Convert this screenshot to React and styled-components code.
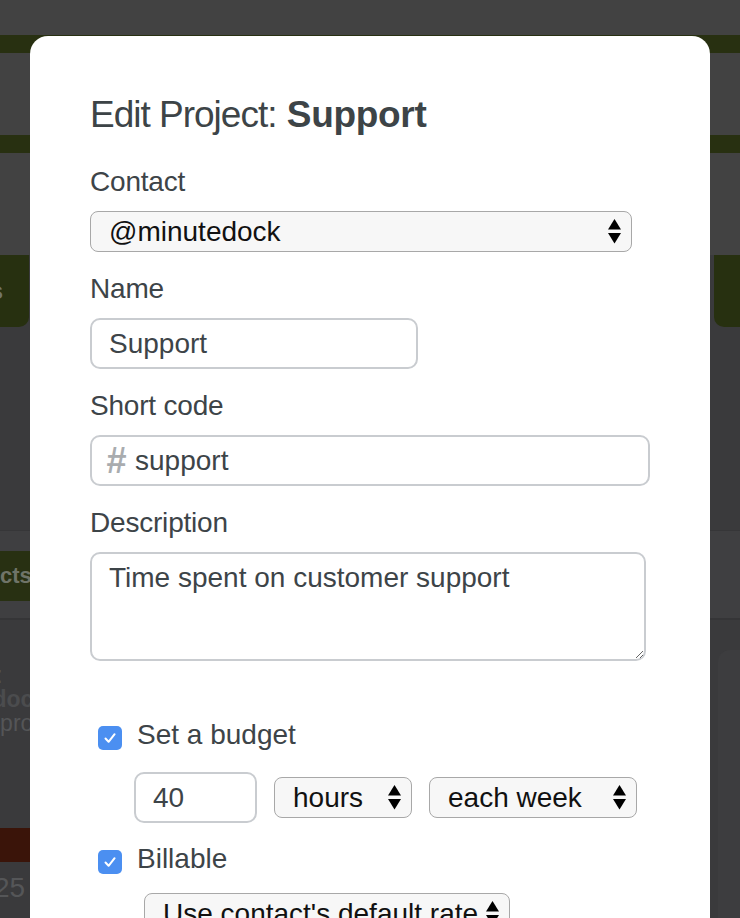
import React from 'react';
import styled, { createGlobalStyle } from 'styled-components';

const GlobalStyle = createGlobalStyle`
  html, body {
    margin: 0;
    padding: 0;
    overflow: hidden;
    background: #3a3a3c;
  }
  * {
    box-sizing: border-box;
  }
`;

export default function App() {
  return (
    <>
      <GlobalStyle />
      <Page>
        <Backdrop>
          <Band height={35} />
          <Stripe />
          <Band height={82} />
          <Stripe />
          <Band height={102} />
          <ActionRow>
            <GreenTab side="left">
              <span>New projects</span>
            </GreenTab>
            <GreenTab side="right" />
          </ActionRow>
          <Spacer height={203} />
          <TabStrip>
            <Tab>Projects</Tab>
          </TabStrip>
          <ListRow>
            <CardText>
              <BgLine>Contact:</BgLine>
              <BgLine bold>minutedock</BgLine>
              <BgLine>Internal project</BgLine>
              <RedBar />
              <BgNumber>25</BgNumber>
            </CardText>
            <SideCard />
          </ListRow>
        </Backdrop>

        <Modal>
          <Title>
            <TitleLight>Edit Project:</TitleLight> <strong>Support</strong>
          </Title>

          <Group>
            <Label>Contact</Label>
            <Select width={542}>
              <span>@minutedock</span>
              <Arrows />
            </Select>
          </Group>

          <Group>
            <Label>Name</Label>
            <TextInput width={328} readOnly value="Support" />
          </Group>

          <Group>
            <Label>Short code</Label>
            <PrefixField>
              <Hash>#</Hash>
              <PlainInput readOnly value="support" />
            </PrefixField>
          </Group>

          <Group>
            <Label>Description</Label>
            <TextArea readOnly value="Time spent on customer support" />
          </Group>

          <CheckRow first>
            <CheckBox />
            <CheckLabel>Set a budget</CheckLabel>
          </CheckRow>
          <BudgetRow>
            <TextInput width={123} readOnly value="40" />
            <Select width={138}>
              <span>hours</span>
              <Arrows />
            </Select>
            <Select width={208}>
              <span>each week</span>
              <Arrows />
            </Select>
          </BudgetRow>

          <CheckRow>
            <CheckBox />
            <CheckLabel>Billable</CheckLabel>
          </CheckRow>
          <RateRow>
            <Select width={366}>
              <span>Use contact's default rate</span>
              <Arrows />
            </Select>
          </RateRow>
        </Modal>
      </Page>
    </>
  );
}

function Arrows() {
  return (
    <ArrowIcon width="13" height="25" viewBox="0 0 13 25">
      <path d="M6.5 0 L13 10.5 H0 Z" fill="#000" />
      <path d="M0 14 H13 L6.5 24.5 Z" fill="#000" />
    </ArrowIcon>
  );
}

function CheckBox() {
  return (
    <Box>
      <svg width="16" height="16" viewBox="0 0 16 16">
        <path
          d="M3.5 8.5 L6.6 11.8 L12.6 4.2"
          fill="none"
          stroke="#fff"
          strokeWidth="2"
          strokeLinecap="round"
          strokeLinejoin="round"
        />
      </svg>
    </Box>
  );
}

const Page = styled.div`
  position: relative;
  width: 740px;
  height: 918px;
  overflow: hidden;
  font-family: 'Liberation Sans', Helvetica, Arial, sans-serif;
`;

const Backdrop = styled.div`
  display: flex;
  flex-direction: column;
  width: 100%;
`;

const Band = styled.div`
  height: ${(p) => p.height}px;
  background: #424242;
`;

const Stripe = styled.div`
  height: 18px;
  background: #283011;
`;

const Spacer = styled.div`
  height: ${(p) => p.height}px;
  background: #3a3a3c;
`;

const ActionRow = styled.div`
  display: flex;
  justify-content: space-between;
  height: 72px;
  background: #3a3a3c;
`;

const GreenTab = styled.div`
  display: flex;
  justify-content: flex-end;
  align-items: center;
  overflow: hidden;
  width: ${(p) => (p.side === 'left' ? 29 : 22)}px;
  padding-right: 26px;
  background: #273010;
  border-radius: ${(p) => (p.side === 'left' ? '0 0 10px 0' : '0 0 0 10px')};
  color: #70756a;
  font-size: 24px;
  font-weight: bold;
  white-space: nowrap;
`;

const TabStrip = styled.div`
  height: 90px;
  padding-top: 20px;
  background: #3f3f41;
  border-top: 1px solid #363638;
  border-bottom: 2px solid #353537;
`;

const Tab = styled.div`
  width: 140px;
  height: 50px;
  margin-left: -71px;
  padding-left: 16px;
  display: flex;
  align-items: center;
  background: #283012;
  color: #6f7468;
  font-size: 22px;
  font-weight: bold;
`;

const ListRow = styled.div`
  display: flex;
  justify-content: space-between;
  padding-top: 30px;
`;

const CardText = styled.div`
  display: flex;
  flex-direction: column;
  width: 160px;
  margin-left: -83px;
  padding-top: 13px;
`;

const BgLine = styled.div`
  font-size: 23px;
  line-height: 24px;
  white-space: nowrap;
  color: ${(p) => (p.bold ? '#4b4c4e' : '#545557')};
  font-weight: ${(p) => (p.bold ? 'bold' : 'normal')};
`;

const RedBar = styled.div`
  height: 34px;
  margin-top: 93px;
  background: #3a1409;
`;

const BgNumber = styled.div`
  margin-top: 10px;
  padding-left: 77px;
  font-size: 28px;
  color: #555658;
`;

const SideCard = styled.div`
  width: 22px;
  height: 300px;
  background: #3d3d3f;
  border-top-left-radius: 12px;
`;

const Modal = styled.div`
  position: absolute;
  top: 36px;
  left: 30px;
  width: 680px;
  height: 940px;
  padding: 57px 60px 0;
  background: #fff;
  border-radius: 18px;
  color: #3d4448;
`;

const Title = styled.h1`
  margin: 0 0 28px;
  font-size: 37px;
  line-height: 44px;
  font-weight: normal;
  color: #3d4447;
  white-space: nowrap;

  strong {
    font-weight: bold;
    letter-spacing: -0.3px;
  }
`;

const TitleLight = styled.span`
  letter-spacing: -1px;
`;

const Group = styled.div`
  display: flex;
  flex-direction: column;
  align-items: flex-start;
  margin-bottom: 20px;
`;

const Label = styled.label`
  display: block;
  margin-bottom: 12px;
  font-size: 28px;
  line-height: 34px;
  letter-spacing: -0.2px;
  color: #3d4448;
`;

const Select = styled.div`
  display: flex;
  align-items: center;
  justify-content: space-between;
  width: ${(p) => p.width}px;
  height: 41px;
  padding: 0 10px 0 18px;
  background: #f7f7f7;
  border: 1.5px solid #a8a8a8;
  border-radius: 8px;
  color: #111;
  font-size: 28px;
  white-space: nowrap;
`;

const ArrowIcon = styled.svg`
  flex: none;
  margin-left: 8px;
`;

const TextInput = styled.input`
  width: ${(p) => p.width}px;
  height: 51px;
  padding: 0 17px;
  border: 2px solid #c9ccd0;
  border-radius: 10px;
  background: #fff;
  color: #3d4448;
  font-family: inherit;
  font-size: 28px;
  outline: none;
`;

const PrefixField = styled.div`
  display: flex;
  align-items: center;
  gap: 9px;
  width: 560px;
  height: 51px;
  padding: 0 14px;
  border: 2px solid #c9ccd0;
  border-radius: 10px;
`;

const Hash = styled.span`
  color: #a9acaf;
  font-size: 36px;
  line-height: 36px;
  font-weight: bold;
  font-style: italic;
`;

const PlainInput = styled.input`
  flex: 1;
  min-width: 0;
  border: none;
  padding: 0;
  background: transparent;
  color: #3d4448;
  font-family: inherit;
  font-size: 28px;
  outline: none;
`;

const TextArea = styled.textarea`
  width: 556px;
  height: 109px;
  padding: 7px 17px;
  border: 2px solid #c9ccd0;
  border-radius: 10px;
  color: #3d4448;
  font-family: inherit;
  font-size: 28px;
  line-height: 34px;
  resize: both;
  outline: none;
`;

const CheckRow = styled.div`
  display: flex;
  align-items: flex-start;
  gap: 15px;
  margin-top: ${(p) => (p.first ? 57 : 19)}px;
  padding-left: 8px;
`;

const Box = styled.span`
  display: flex;
  align-items: center;
  justify-content: center;
  width: 24px;
  height: 24px;
  margin-top: 8px;
  border-radius: 5px;
  background: #4b8ff1;
`;

const CheckLabel = styled.span`
  font-size: 28px;
  line-height: 34px;
  color: #3d4448;
`;

const BudgetRow = styled.div`
  display: flex;
  align-items: center;
  gap: 17px;
  margin-top: 20px;
  padding-left: 44px;
`;

const RateRow = styled.div`
  display: flex;
  margin-top: 17px;
  padding-left: 54px;
`;
